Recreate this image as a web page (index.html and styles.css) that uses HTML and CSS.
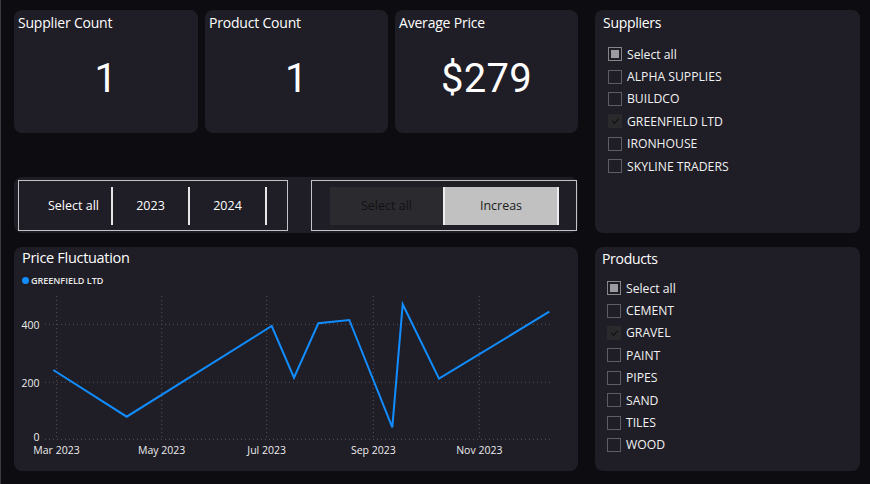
FILE: index.html
```html
<!DOCTYPE html>
<html>
<head>
<meta charset="utf-8">
<link rel="stylesheet" href="styles.css">
</head>
<body>
<div class="page">
  <div class="left-top">
    <div class="kpis">
      <div class="card kpi"><div class="kpi-title">Supplier Count</div><div class="kpi-value">1</div></div>
      <div class="card kpi"><div class="kpi-title">Product Count</div><div class="kpi-value">1</div></div>
      <div class="card kpi"><div class="kpi-title">Average Price</div><div class="kpi-value">$279</div></div>
    </div>
    <div class="card slicers">
      <div class="seg-box years">
        <div class="seg-item">Select all</div>
        <div class="seg-item">2023</div>
        <div class="seg-item">2024</div>
      </div>
      <div class="seg-box trend">
        <div class="tbtn dark">Select all</div>
        <div class="tbtn light">Increas</div>
      </div>
    </div>
  </div>

  <div class="card list sup">
    <div class="list-title">Suppliers</div>
    <div class="rows">
      <div class="row"><span class="cb partial"></span>Select all</div>
      <div class="row"><span class="cb"></span>ALPHA SUPPLIES</div>
      <div class="row"><span class="cb"></span>BUILDCO</div>
      <div class="row"><span class="cb checked"></span>GREENFIELD LTD</div>
      <div class="row"><span class="cb"></span>IRONHOUSE</div>
      <div class="row"><span class="cb"></span>SKYLINE TRADERS</div>
    </div>
  </div>

  <div class="card chart">
    <div class="chart-title">Price Fluctuation</div>
    <div class="legend"><span class="dot"></span>GREENFIELD LTD</div>
    <svg class="plot" width="564" height="184" viewBox="0 0 564 184">
      <g class="grid">
        <line x1="31" y1="37.3" x2="539" y2="37.3"/>
        <line x1="31" y1="95.3" x2="539" y2="95.3"/>
        <line x1="31" y1="152.3" x2="539" y2="152.3"/>
        <line x1="42.7" y1="9" x2="42.7" y2="152"/>
        <line x1="147.7" y1="9" x2="147.7" y2="152"/>
        <line x1="252.7" y1="9" x2="252.7" y2="152"/>
        <line x1="359.3" y1="9" x2="359.3" y2="152"/>
        <line x1="465.3" y1="9" x2="465.3" y2="152"/>
      </g>
      <g class="ylab">
        <text x="25.5" y="37.5">400</text>
        <text x="25.5" y="95.5">200</text>
        <text x="25.5" y="150">0</text>
      </g>
      <g class="xlab">
        <text x="42.5" y="163">Mar 2023</text>
        <text x="147.7" y="163">May 2023</text>
        <text x="252.7" y="163">Jul 2023</text>
        <text x="359.3" y="163">Sep 2023</text>
        <text x="465.3" y="163">Nov 2023</text>
      </g>
      <polyline class="series" points="39.3,83 112.7,129.7 257.7,39 280,90.7 304.3,36.3 335.3,33 378.3,140.3 388.7,17.3 425,91.7 535.3,24.7"/>
    </svg>
  </div>

  <div class="card list prod">
    <div class="list-title">Products</div>
    <div class="rows">
      <div class="row"><span class="cb partial"></span>Select all</div>
      <div class="row"><span class="cb"></span>CEMENT</div>
      <div class="row"><span class="cb checked"></span>GRAVEL</div>
      <div class="row"><span class="cb"></span>PAINT</div>
      <div class="row"><span class="cb"></span>PIPES</div>
      <div class="row"><span class="cb"></span>SAND</div>
      <div class="row"><span class="cb"></span>TILES</div>
      <div class="row"><span class="cb"></span>WOOD</div>
    </div>
  </div>
</div>
</body>
</html>
```
FILE: styles.css
```css
html, body {
  margin: 0;
  padding: 0;
}
body {
  width: 870px;
  height: 484px;
  background: #0d0c11;
  font-family: "Open Sans", "Noto Sans", sans-serif;
  color: #ffffff;
  overflow: hidden;
  box-shadow: inset 1px 0 0 #3a3a3c;
}
.page {
  display: grid;
  grid-template-columns: 564px 265px;
  grid-template-rows: 223px 224px;
  column-gap: 17px;
  row-gap: 14px;
  padding: 10px 0 0 14px;
}
.card {
  background: #1f1d26;
  border-radius: 8px;
}
.left-top {
  display: flex;
  flex-direction: column;
  justify-content: space-between;
}
.kpis {
  display: grid;
  grid-template-columns: 184px 183px 183px;
  column-gap: 7px;
  height: 123px;
}
.kpi {
  display: flex;
  flex-direction: column;
  padding: 2px 4px 10px;
  box-sizing: border-box;
}
.kpi-title {
  font-size: 14px;
  line-height: 22px;
  letter-spacing: -0.2px;
}
.kpi-value {
  flex: 1;
  display: flex;
  align-items: center;
  justify-content: center;
  font-family: Roboto, sans-serif;
  font-size: 40px;
  font-weight: 400;
  letter-spacing: 0.3px;
}
.slicers {
  height: 56px;
  display: flex;
  align-items: flex-start;
  padding: 3px 0 0 4px;
  box-sizing: border-box;
  gap: 23px;
}
.seg-box {
  height: 51px;
  box-sizing: border-box;
  border: 1px solid #c4c4c6;
  display: flex;
  align-items: center;
  font-size: 12.5px;
}
.years {
  width: 270px;
  padding-left: 17px;
}
.seg-item {
  width: 77px;
  height: 38px;
  box-sizing: border-box;
  border-right: 2px solid #e6e6e6;
  display: flex;
  align-items: center;
  justify-content: center;
}
.trend {
  width: 266px;
  padding-left: 18px;
}
.tbtn {
  height: 38px;
  box-sizing: border-box;
  border-right: 2px solid #ececec;
  display: flex;
  align-items: center;
  justify-content: center;
  color: #121214;
}
.tbtn.dark {
  width: 115px;
  background: #2b2a2f;
}
.tbtn.light {
  width: 114px;
  background: #c1c1c1;
  color: #1c1c1e;
}
.list {
  display: flex;
  flex-direction: column;
}
.list-title {
  font-size: 14px;
  line-height: 20px;
  letter-spacing: -0.3px;
}
.sup { padding: 3px 0 0 8px; }
.sup .rows { margin-top: 10px; padding-left: 5px; }
.prod { padding: 2px 0 0 7px; }
.prod .rows { margin-top: 8px; padding-left: 5px; }
.rows {
  display: flex;
  flex-direction: column;
}
.row {
  height: 22.4px;
  display: flex;
  align-items: center;
  gap: 5px;
  font-size: 12.2px;
  letter-spacing: 0;
  color: #f2f2f2;
}
.cb {
  width: 14px;
  height: 14px;
  box-sizing: border-box;
  border: 1px solid #5e5e62;
  display: flex;
  align-items: center;
  justify-content: center;
}
.cb.partial {
  border-color: #85858a;
}
.cb.partial::after {
  content: "";
  width: 8px;
  height: 8px;
  background: #9c9ca0;
}
.cb.checked {
  border-color: #2a2a2d;
  background: #2a2a2d;
}
.cb.checked::after {
  content: "";
  width: 6px;
  height: 3px;
  border-left: 1px solid #0f0f10;
  border-bottom: 1px solid #0f0f10;
  transform: translateY(-1px) rotate(-45deg);
}
.chart {
  display: flex;
  flex-direction: column;
}
.chart-title {
  margin: 1px 0 0 8px;
  height: 20px;
  line-height: 20px;
  font-size: 14.5px;
  letter-spacing: -0.3px;
}
.legend {
  margin: 5px 0 0 8px;
  height: 14px;
  display: flex;
  align-items: center;
  gap: 2px;
  font-size: 9px;
  font-weight: 600;
  color: #e8e8e8;
}
.dot {
  width: 7px;
  height: 7px;
  border-radius: 50%;
  background: #118dff;
}
.plot {
  display: block;
}
.grid line {
  stroke: #55545c;
  stroke-width: 1;
  stroke-dasharray: 1 3;
}
.ylab text {
  fill: #ececec;
  font-size: 10.5px;
  text-anchor: end;
  dominant-baseline: central;
}
.xlab text {
  fill: #ececec;
  font-size: 10.5px;
  text-anchor: middle;
  dominant-baseline: central;
}
.series {
  fill: none;
  stroke: #118dff;
  stroke-width: 2;
  stroke-linejoin: miter;
}
```
